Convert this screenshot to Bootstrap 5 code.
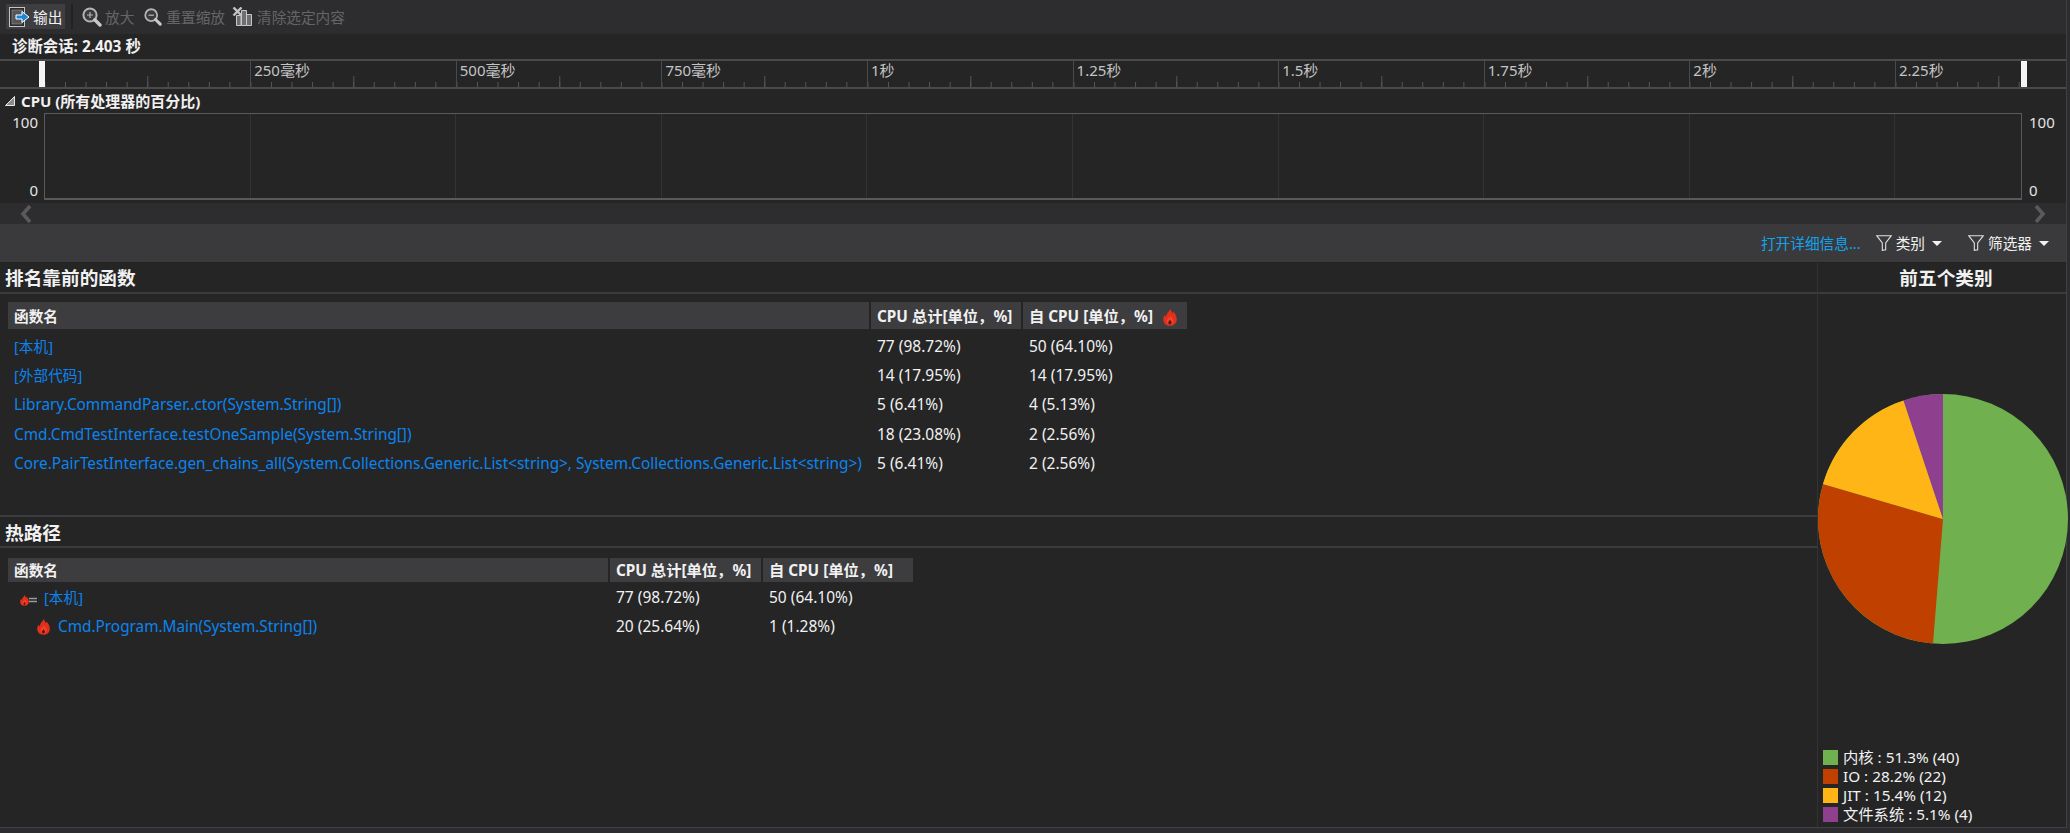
<!DOCTYPE html>
<html lang="zh-CN">
<head>
<meta charset="utf-8">
<title>诊断会话</title>
<link href="https://cdn.jsdelivr.net/npm/bootstrap@5.3.0/dist/css/bootstrap.min.css" rel="stylesheet">
<style>
html,body{height:100%;overflow:hidden}
body{background:#2d2d30;color:#f1f1f1;font-family:"Noto Sans","Noto Sans CJK SC",sans-serif;font-size:14.67px;line-height:20px}
.shell{width:2067px;height:828px;background:#252526;border-right:1px solid #3f3f46;border-bottom:1px solid #3f3f46}
.topbar{height:34px;background:#2d2d30;padding:4px 0 5px 6px}
.tool-on{height:25px;width:59px;background:#3e3e40;padding-left:3px;gap:3px;flex:none}
.tool-sep{width:2px;height:25px;background:#222224;margin:0 9px 0 6px;flex:none}
.tool-off{color:#656565;height:25px;flex:none}
.tool-a{gap:3px}.tool-b{gap:4px;margin-left:10px}.tool-c{gap:5px;margin-left:7px}
.session{height:25px;padding-left:12px;font-weight:700;font-size:15.4px}
.ruler{height:30px;border-top:2px solid #4a4a4a;border-bottom:2px solid #4a4a4a;color:#c4c4c4;font-size:15px}
.rule-gap{width:39px;flex:none}
.rule-handle{width:6px;background:#f4f4f4;flex:none}
.rule-cell{flex:none;width:205.6px;padding:0 0 0 3px;line-height:19px;border-left:1px solid #4a4a4a;
 background:linear-gradient(to right,#565656 1px,transparent 1px) 102.3px 100%/205.6px 11px repeat-x,
 linear-gradient(to right,#565656 1px,transparent 1px) 20px 100%/20.56px 5px repeat-x}
.rule-first{border-left:0;width:205.2px}
.rule-last{width:126px}
.cpu-head{height:24px;padding-left:5px;gap:6px;font-weight:700;font-size:15px}
.graph{height:87px}
.axis-l{width:44px;padding-right:6px;text-align:right}
.axis-r{padding-left:7px}
.axis-l,.axis-r{font-size:15px;line-height:20px;color:#e4e4e4;margin-top:-1px}
.plot{flex:none;width:1978px;border:1px solid #5a5a5a;border-width:1px 1px 2px 1px}
.plot-cell{flex:none;width:205.6px;border-right:1px solid #333335}
.plot-tail{flex:1 1 auto;border-right:0}
.scroller{height:21px;margin-top:3px;background:#2d2d30;padding:0 20px}
.cmdbar{height:38px;background:#3a3a3d;padding-right:17px}
.cmd-link{color:#12a3ee;margin-right:15px;text-decoration:none}
.cmd-item{gap:4px}
.cmd-cat{margin-right:26px}
.caret-tri{width:0;height:0;border:5px solid transparent;border-top:5px solid #f1f1f1;border-bottom:0;margin-left:3px}
.body-split{flex:1 1 auto;min-height:0;border-top:1px solid #222}
.left-col{width:1817px;flex:none}
.right-col{width:249px;flex:none;border-left:1px solid #333336}
.sec-head{font-size:18.67px;font-weight:700;height:31px;line-height:29px;padding-left:5px;border-bottom:2px solid #3c3c40}
.sec-a{height:254px;border-bottom:2px solid #3c3c40}
.sec-head-b{line-height:31px}
.func-table{table-layout:fixed;margin:8px 0 0 6px;border-collapse:separate;border-spacing:2px 0;width:auto;--bs-table-bg:transparent;--bs-table-color:#f1f1f1;color:#f1f1f1}
.func-table>:not(caption)>*>*{border:0;padding:0 0 0 6px;background:transparent;box-shadow:none;color:#f1f1f1;vertical-align:middle;white-space:nowrap}
.func-table>thead>tr>th{font-weight:700;font-size:15.3px;background:#3d3d40;background-clip:padding-box;border-bottom:2px solid transparent;height:29px}
.func-table>thead>tr>th.th-cjk{font-size:14.67px}
.func-table>tbody>tr>td{height:29.3px;font-size:15.5px}
.func-table>tbody>tr>td>a{color:#0b84ee;text-decoration:none;font-size:15.33px}
.func-table>tbody>tr>td>a.a-cjk{font-size:14.67px}
.hot-table{margin-top:10px}
.func-table.hot-table>thead>tr>th{height:24.5px;border-bottom-width:.5px}
.w-name{width:861px}.w-tot{width:150px}.w-self{width:164px}
.w-hname{width:600px}.w-htot{width:151px}.w-hself{width:150px}
.hd-flame{margin-left:10px;vertical-align:-4px}
.func-table>tbody>tr>td.lvl-1{padding-left:0}
.hot-ic{margin:0 7px 0 12px;vertical-align:-3px}
.hot-ic2{margin:0 8px 0 29px;vertical-align:-3px}
.pie-title{font-size:18.67px;font-weight:700;height:31px;line-height:29px;text-align:center;padding-left:8px;border-bottom:2px solid #3c3c40}
.pie-wrap{height:351px;padding-top:100px}
.pie-svg{display:block;width:250px;height:250px}
.legend{padding-left:5px;margin-top:103px;font-size:15.3px;line-height:19px}
.legend-row{height:19px;gap:5px}
.swatch{width:15px;height:15px;flex:none}
.c-green{background:#70b04e}.c-red{background:#c04000}.c-amber{background:#ffb515}.c-purple{background:#8e3f8e}
</style>
</head>
<body>
<svg width="0" height="0" class="d-block position-absolute">
<defs>
<symbol id="flame" viewBox="0 0 14 17">
<path d="M7.6 0c.2 2 1.500 3 1.900 4.400.5-.4.7-1 .7-1.800C12 4.200 13.600 7 13.800 10c.2 3.600-2.400 6.800-6.800 6.800S.2 13.800.2 10.400C.2 8.600 1 7 2 5.800c.1 1 .5 1.700 1.100 2.100C3 4.800 5.800 2.500 7.600 0z" fill="#e2301c"/>
<path d="M7.400 6.800c.5 1.500 2.900 2.900 2.900 5.400 0 2.100-1.400 3.400-3.200 3.400-1.900 0-3.300-1.300-3.300-3.200 0-2.400 2.800-3.300 3.600-5.600z" fill="#f4452a"/>
<path d="M7.100 10.600c.4 1 1.500 1.700 1.500 3 0 1-.7 1.900-1.600 1.900-1 0-1.700-.8-1.700-1.800 0-1.300 1.400-1.900 1.800-3.100z" fill="#5b1610"/>
</symbol>
<symbol id="lens" viewBox="0 0 20 20">
<circle cx="8" cy="8" r="6.600" fill="#3a3a3c" stroke="#b4b4b4" stroke-width="2"/>
<path d="M12.800 12.800 18 18" stroke="#c8c8c8" stroke-width="3.400" stroke-linecap="round"/>
</symbol>
<symbol id="funnel" viewBox="0 0 16 16">
<path d="M.7.7h14.600L9.700 8v6.800L6.300 15.300V8z" fill="none" stroke="#e0e0e0" stroke-width="1.100"/>
</symbol>
</defs>
</svg>
<div class="shell d-flex flex-column">
  <div class="topbar d-flex align-items-center">
    <div class="tool-on d-flex align-items-center">
      <svg width="21" height="20" viewBox="0 0 21 20"><rect x=".5" y=".5" width="15" height="19" fill="#2a2a2c" stroke="#c4c4c4"/><rect x="3" y="3" width="10" height="14" fill="#555" stroke="#999" stroke-width=".6"/><path d="M7 8h6V4.500l7 5.500-7 5.500V12H7z" fill="#1c86d8" stroke="#fff" stroke-width="1"/></svg>
      <span>输出</span>
    </div>
    <div class="tool-sep"></div>
    <div class="tool-off tool-a d-flex align-items-center">
      <svg width="20" height="20"><use href="#lens"/><path d="M8 5v6M5 8h6" stroke="#b4b4b4" stroke-width="1.200"/></svg>
      <span class="text-nowrap">放大</span>
    </div>
    <div class="tool-off tool-b d-flex align-items-center">
      <svg width="18" height="20" viewBox="0 0 20 22"><use href="#lens" width="20" height="20" y="1"/><path d="M5 9h6" stroke="#b4b4b4" stroke-width="1.400"/></svg>
      <span class="text-nowrap">重置缩放</span>
    </div>
    <div class="tool-off tool-c d-flex align-items-center">
      <svg width="20" height="20" viewBox="0 0 20 20"><path d="M4.500 8.500h4.500v10H4.500zM9.500 3.500h5v15h-5zM14.500 7.500h5v11h-5z" fill="#6e6e6e" stroke="#c8c8c8"/><path d="M1.500 .5l8 8M9.500 .5l-8 8" stroke="#c4c4c4" stroke-width="2.400"/></svg>
      <span class="text-nowrap">清除选定内容</span>
    </div>
  </div>
  <div class="session d-flex align-items-center">诊断会话: 2.403 秒</div>
  <div class="ruler d-flex">
    <div class="rule-gap"></div>
    <div class="rule-handle"></div>
    <div class="rule-cell rule-first"></div>
    <div class="rule-cell">250毫秒</div>
    <div class="rule-cell">500毫秒</div>
    <div class="rule-cell">750毫秒</div>
    <div class="rule-cell">1秒</div>
    <div class="rule-cell">1.25秒</div>
    <div class="rule-cell">1.5秒</div>
    <div class="rule-cell">1.75秒</div>
    <div class="rule-cell">2秒</div>
    <div class="rule-cell rule-last">2.25秒</div>
    <div class="rule-handle"></div>
  </div>
  <div class="cpu-head d-flex align-items-center">
    <svg width="10" height="10" viewBox="0 0 10 10"><path d="M9.500.5v9H.5z" fill="#8a8a8a" stroke="#e8e8e8"/></svg>
    <span>CPU (所有处理器的百分比)</span>
  </div>
  <div class="graph d-flex">
    <div class="axis-l d-flex flex-column justify-content-between"><span>100</span><span>0</span></div>
    <div class="plot d-flex">
      <div class="plot-cell"></div><div class="plot-cell"></div><div class="plot-cell"></div><div class="plot-cell"></div><div class="plot-cell"></div>
      <div class="plot-cell"></div><div class="plot-cell"></div><div class="plot-cell"></div><div class="plot-cell"></div><div class="plot-cell plot-tail"></div>
    </div>
    <div class="axis-r d-flex flex-column justify-content-between"><span>100</span><span>0</span></div>
  </div>
  <div class="scroller d-flex align-items-center justify-content-between">
    <svg width="12" height="18" viewBox="0 0 12 18"><path d="M10 1 3 9l7 8" fill="none" stroke="#5a5a5c" stroke-width="3.600"/></svg>
    <svg width="12" height="18" viewBox="0 0 12 18"><path d="m2 1 7 8-7 8" fill="none" stroke="#5a5a5c" stroke-width="3.600"/></svg>
  </div>
  <div class="cmdbar d-flex align-items-center justify-content-end">
    <a class="cmd-link" href="#">打开详细信息...</a>
    <div class="cmd-item cmd-cat d-flex align-items-center">
      <svg width="16" height="16"><use href="#funnel"/></svg><span>类别</span><span class="caret-tri"></span>
    </div>
    <div class="cmd-item d-flex align-items-center">
      <svg width="16" height="16"><use href="#funnel"/></svg><span>筛选器</span><span class="caret-tri"></span>
    </div>
  </div>
  <div class="body-split d-flex">
    <div class="left-col">
      <section class="sec-a">
        <div class="sec-head">排名靠前的函数</div>
        <table class="table func-table">
          <colgroup><col class="w-name"><col class="w-tot"><col class="w-self"></colgroup>
          <thead><tr><th class="th-cjk">函数名</th><th>CPU 总计[单位，%]</th><th>自 CPU [单位，%]<svg class="hd-flame" width="14" height="17"><use href="#flame"/></svg></th></tr></thead>
          <tbody>
            <tr><td><a class="a-cjk" href="#">[本机]</a></td><td>77 (98.72%)</td><td>50 (64.10%)</td></tr>
            <tr><td><a class="a-cjk" href="#">[外部代码]</a></td><td>14 (17.95%)</td><td>14 (17.95%)</td></tr>
            <tr><td><a href="#">Library.CommandParser..ctor(System.String[])</a></td><td>5 (6.41%)</td><td>4 (5.13%)</td></tr>
            <tr><td><a href="#">Cmd.CmdTestInterface.testOneSample(System.String[])</a></td><td>18 (23.08%)</td><td>2 (2.56%)</td></tr>
            <tr><td><a href="#">Core.PairTestInterface.gen_chains_all(System.Collections.Generic.List&lt;string&gt;, System.Collections.Generic.List&lt;string&gt;)</a></td><td>5 (6.41%)</td><td>2 (2.56%)</td></tr>
          </tbody>
        </table>
      </section>
      <section>
        <div class="sec-head sec-head-b">热路径</div>
        <table class="table func-table hot-table">
          <colgroup><col class="w-hname"><col class="w-htot"><col class="w-hself"></colgroup>
          <thead><tr><th class="th-cjk">函数名</th><th>CPU 总计[单位，%]</th><th>自 CPU [单位，%]</th></tr></thead>
          <tbody>
            <tr><td class="lvl-1"><svg class="hot-ic" width="17" height="12" viewBox="0 0 17 12"><use href="#flame" width="9" height="11" y="1"/><path d="M9 4.500h8M9 7.500h8" stroke="#9a9a9a" stroke-width="1.400"/></svg><a class="a-cjk" href="#">[本机]</a></td><td>77 (98.72%)</td><td>50 (64.10%)</td></tr>
            <tr><td class="lvl-1"><svg class="hot-ic2" width="13" height="16" viewBox="0 0 14 17"><use href="#flame" width="14" height="17"/></svg><a href="#">Cmd.Program.Main(System.String[])</a></td><td>20 (25.64%)</td><td>1 (1.28%)</td></tr>
          </tbody>
        </table>
      </section>
    </div>
    <aside class="right-col">
      <div class="pie-title">前五个类别</div>
      <div class="pie-wrap">
        <svg class="pie-svg" viewBox="0 0 250 250">
          <circle cx="125" cy="125" r="125" fill="#70b04e"/>
          <path d="M125 125 L115 249.600 A125 125 0 0 1 5 90 Z" fill="#c04000"/>
          <path d="M125 125 L5 90 A125 125 0 0 1 85.500 6.400 Z" fill="#ffb515"/>
          <path d="M125 125 L85.500 6.400 A125 125 0 0 1 125 0 Z" fill="#8e3f8e"/>
        </svg>
      </div>
      <div class="legend">
        <div class="legend-row d-flex align-items-center"><span class="swatch c-green"></span><span>内核 : 51.3% (40)</span></div>
        <div class="legend-row d-flex align-items-center"><span class="swatch c-red"></span><span>IO : 28.2% (22)</span></div>
        <div class="legend-row d-flex align-items-center"><span class="swatch c-amber"></span><span>JIT : 15.4% (12)</span></div>
        <div class="legend-row d-flex align-items-center"><span class="swatch c-purple"></span><span>文件系统 : 5.1% (4)</span></div>
      </div>
    </aside>
  </div>
</div>
<script src="https://cdn.jsdelivr.net/npm/bootstrap@5.3.0/dist/js/bootstrap.bundle.min.js"></script>
</body>
</html>
